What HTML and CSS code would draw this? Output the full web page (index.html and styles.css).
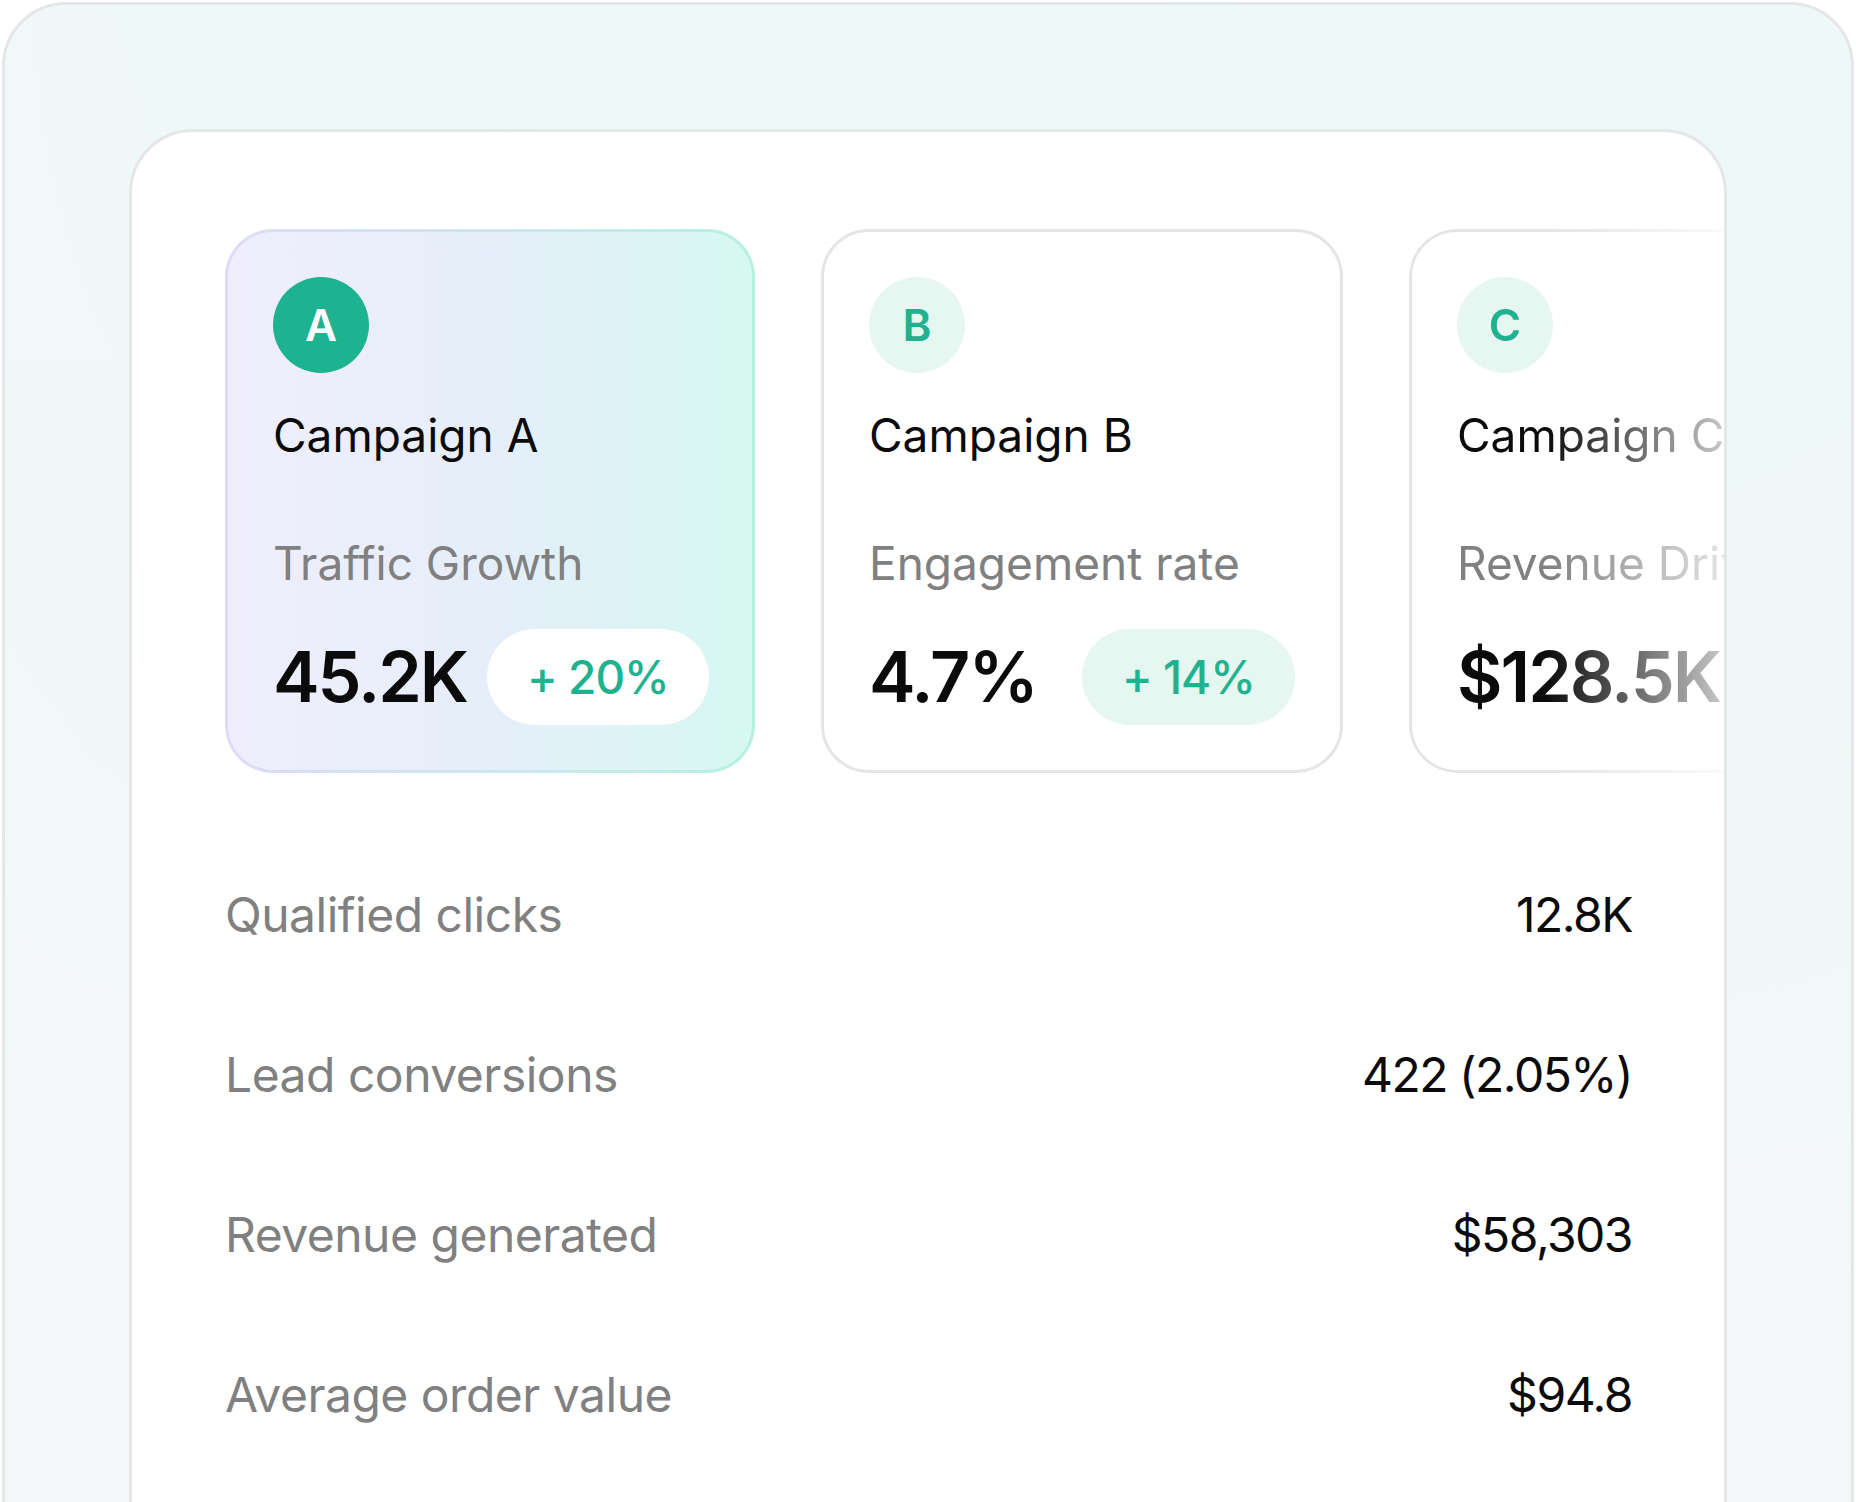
FILE: index.html
```html
<!DOCTYPE html>
<html lang="en">

<head>
    <meta charset="UTF-8">
    <meta name="viewport" content="width=device-width, initial-scale=1.0">
    <title>Campaign Overview</title>
    <link rel="stylesheet" href="styles.css">
</head>

<body>
    <div class="frame">
        <div class="panel">
            <div class="campaigns">
                <div class="campaign active">
                    <div class="avatar">A</div>
                    <div class="campaign-name">Campaign A</div>
                    <div class="metric-label">Traffic Growth</div>
                    <div class="metric-row">
                        <span class="metric-value">45.2K</span>
                        <span class="change">+ 20%</span>
                    </div>
                </div>

                <div class="campaign">
                    <div class="avatar">B</div>
                    <div class="campaign-name">Campaign B</div>
                    <div class="metric-label">Engagement rate</div>
                    <div class="metric-row">
                        <span class="metric-value">4.7%</span>
                        <span class="change">+ 14%</span>
                    </div>
                </div>

                <div class="campaign faded">
                    <div class="avatar">C</div>
                    <div class="campaign-name">Campaign C</div>
                    <div class="metric-label">Revenue Driven</div>
                    <div class="metric-row">
                        <span class="metric-value">$128.5K</span>
                        <span class="change">+ 9%</span>
                    </div>
                </div>
            </div>

            <ul class="stats">
                <li><span class="stat-label">Qualified clicks</span><span class="stat-value">12.8K</span></li>
                <li><span class="stat-label">Lead conversions</span><span class="stat-value">422 (2.05%)</span></li>
                <li><span class="stat-label">Revenue generated</span><span class="stat-value">$58,303</span></li>
                <li><span class="stat-label">Average order value</span><span class="stat-value">$94.8</span></li>
            </ul>
        </div>
    </div>
</body>

</html>
```

FILE: styles.css
```css
html,
body {
    margin: 0;
    height: 1502px;
    overflow: hidden;
    background: #ffffff;
}

body {
    font-family: Inter, "Noto Sans", sans-serif;
    color: #0b0b0b;
}

.frame {
    margin: 2px;
    height: 1700px;
    padding: 124px;
    border: 3px solid #e4e6e7;
    border-radius: 64px;
    background:
        radial-gradient(ellipse 90% 70% at 65% 0%, #edf8f9 0%, rgba(237, 248, 249, 0) 100%),
        linear-gradient(180deg, #f1f8f8 0%, #f5f7f7 100%);
}

.panel {
    height: 1600px;
    padding: 97px 92px 0 93px;
    border: 3px solid #e4e6e7;
    border-radius: 64px;
    background: #ffffff;
    overflow: hidden;
}

.campaigns {
    display: flex;
    gap: 66px;
}

.campaign {
    flex: none;
    width: 426px;
    padding: 45px;
    border: 3px solid #e5e5e5;
    border-radius: 48px;
    background: #ffffff;
}

.campaign.active {
    width: 434px;
    border-color: transparent;
    background:
        linear-gradient(90deg, #f0eefc 0%, #e5eefa 50%, #d6f8f0 100%) padding-box,
        linear-gradient(90deg, #dedbf6 0%, #c9e8ee 60%, #b4f1df 100%) border-box;
}

.campaign.faded {
    width: auto;
    -webkit-mask-image: linear-gradient(90deg, #000 24%, transparent 64%);
    mask-image: linear-gradient(90deg, #000 24%, transparent 64%);
}

.avatar {
    width: 96px;
    height: 96px;
    border-radius: 50%;
    background: #e6f6f1;
    color: #1fb28f;
    font-size: 44px;
    font-weight: 600;
    display: flex;
    align-items: center;
    justify-content: center;
}

.active .avatar {
    background: #1db391;
    color: #ffffff;
}

.campaign-name {
    margin-top: 39px;
    font-size: 46px;
    line-height: 1;
    white-space: nowrap;
}

.metric-label {
    margin-top: 82px;
    font-size: 46px;
    line-height: 1;
    color: #808080;
    white-space: nowrap;
}

.metric-row {
    margin-top: 43px;
    display: flex;
    align-items: center;
    justify-content: space-between;
    gap: 20px;
}

.metric-value {
    font-size: 70px;
    font-weight: 600;
    line-height: 1;
    letter-spacing: -2px;
    white-space: nowrap;
}

.change {
    padding: 25px 40px;
    border-radius: 999px;
    background: #e6f6f1;
    color: #1fb28f;
    font-size: 46px;
    font-weight: 500;
    line-height: 1;
    letter-spacing: -1px;
    white-space: nowrap;
}

.active .change {
    background: #ffffff;
}

.stats {
    list-style: none;
    margin: 61px 0 0;
    padding: 0;
}

.stats li {
    height: 160px;
    display: flex;
    align-items: center;
    justify-content: space-between;
    font-size: 48px;
}

.stat-label {
    color: #808080;
    letter-spacing: -0.5px;
}

.stat-value {
    color: #0b0b0b;
    letter-spacing: -1.5px;
}
```
